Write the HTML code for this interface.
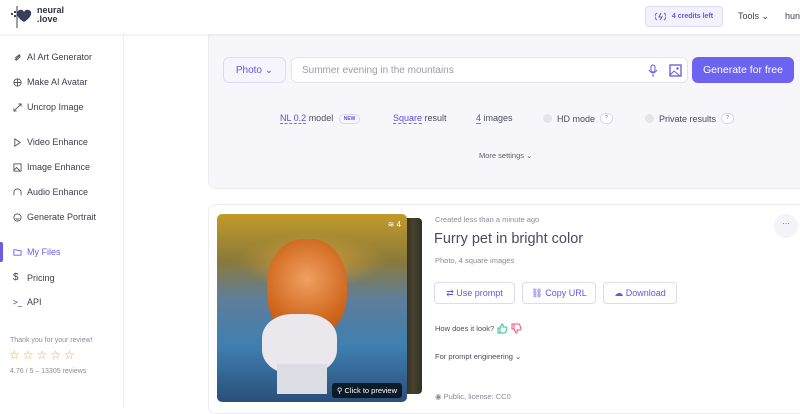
<!DOCTYPE html><html><head><style>
*{box-sizing:border-box;margin:0;padding:0}
body{width:800px;height:407px;overflow:hidden;background:#fff;font-family:"Liberation Sans",sans-serif;color:#3c3d52;position:relative}
.hdr{position:absolute;left:0;top:0;width:800px;height:34px;background:#fff;box-shadow:0 1px 3px rgba(0,0,0,.08);z-index:3}
.side{position:absolute;left:0;top:34px;width:124px;height:373px;border-right:1px solid #ececf2;background:#fff}
.si{position:absolute;left:13px;font-size:9px;color:#3c3d52;display:flex;align-items:center;gap:5px}
.si svg{width:9px;height:9px}
.panel{position:absolute;left:208px;top:34px;width:600px;height:155px;background:#f7f7fb;border-radius:0 0 0 8px;border:1px solid #ececf3;border-top:none}
.pill{position:absolute;border:1px solid #dcdaf5;border-radius:6px;background:#fff}
.card{position:absolute;left:208px;top:204px;width:600px;height:210px;border:1px solid #ececf3;border-radius:8px;background:#fff}
.btn{position:absolute;top:282px;height:22px;border:1px solid #dcdaf5;border-radius:4px;color:#6457e0;font-size:9px;display:flex;align-items:center;justify-content:center;gap:5px}
.u{border-bottom:1px dashed #7b6ff0;color:#5a4fd8}
</style></head><body>
<div class="hdr">
<svg style="position:absolute;left:9px;top:6px" width="24" height="22" viewBox="0 0 24 22"><path d="M8 6c2-3 6-3 7 0 1-3 6-3 7 0 1 3-2 7-7 10-5-3-8-7-7-10z" fill="#3a3d5c"/><rect x="2" y="7" width="2" height="2" fill="#3a3d5c"/><rect x="5" y="5" width="2" height="2" fill="#3a3d5c"/><rect x="5" y="9" width="2" height="2" fill="#3a3d5c"/><rect x="7.5" y="0" width="1" height="22" fill="#3a3d5c"/></svg>
<div style="position:absolute;left:37px;top:6px;font-size:9px;line-height:9px;color:#2f3147;font-weight:bold">neural<br>.love</div>
<div style="position:absolute;left:645px;top:6px;width:78px;height:21px;border:1px solid #dcd9f6;background:#f2f1fd;border-radius:4px;color:#6457e0;font-size:7px;font-weight:bold;display:flex;align-items:center;justify-content:center;gap:6px"><svg width="11" height="9" viewBox="0 0 11 9"><path d="M2 1a4 4 0 0 0 0 7M9 1a4 4 0 0 1 0 7M6 1 4 5h3L5 8" stroke="#6457e0" fill="none"/></svg>4 credits left</div>
<div style="position:absolute;left:738px;top:11px;font-size:9px;color:#3c3d52">Tools ⌄</div>
<div style="position:absolute;left:785px;top:11px;font-size:9px;color:#3c3d52">hun</div>
</div>
<div class="side">
<div class="si" style="top:18px"><svg viewBox="0 0 10 10"><path d="M2 8 8 2M3 5l4-3 1 2-4 4z" stroke="#555" fill="none"/></svg>AI Art Generator</div>
<div class="si" style="top:43px"><svg viewBox="0 0 10 10"><circle cx="5" cy="5" r="4" stroke="#555" fill="none"/><path d="M1 5h8M5 1v8" stroke="#555"/></svg>Make AI Avatar</div>
<div class="si" style="top:68px"><svg viewBox="0 0 10 10"><path d="M1 9 9 1M6 1h3v3M1 6v3h3" stroke="#555" fill="none"/></svg>Uncrop Image</div>
<div class="si" style="top:103px"><svg viewBox="0 0 10 10"><path d="M2 1v8l6-4z" stroke="#555" fill="none"/></svg>Video Enhance</div>
<div class="si" style="top:128px"><svg viewBox="0 0 10 10"><rect x="1" y="1" width="8" height="8" stroke="#555" fill="none"/><path d="M1 8l3-3 4 4" stroke="#555" fill="none"/></svg>Image Enhance</div>
<div class="si" style="top:153px"><svg viewBox="0 0 10 10"><path d="M1 8V5a4 4 0 0 1 8 0v3" stroke="#555" fill="none"/></svg>Audio Enhance</div>
<div class="si" style="top:178px"><svg viewBox="0 0 10 10"><circle cx="5" cy="5" r="4" stroke="#555" fill="none"/><path d="M3 6q2 2 4 0" stroke="#555" fill="none"/></svg>Generate Portrait</div>
<div style="position:absolute;left:0;top:208px;width:3px;height:20px;background:#6c5ce7;border-radius:0 2px 2px 0"></div>
<div class="si" style="top:213px;color:#6c5ce7"><svg viewBox="0 0 10 10"><path d="M1 2h3l1 1h4v5H1z" stroke="#6c5ce7" fill="none"/></svg>My Files</div>
<div class="si" style="top:238px"><span style="width:9px;font-size:10px">$</span>Pricing</div>
<div class="si" style="top:263px"><span style="width:9px;font-size:8px">&gt;_</span>API</div>
<div style="position:absolute;left:10px;top:303px;font-size:7px;color:#8a8b9c">Thank you for your review!</div>
<div style="position:absolute;left:9px;top:314px;font-size:12px;color:#f5a623;letter-spacing:3px">☆☆☆☆☆</div>
<div style="position:absolute;left:10px;top:334px;font-size:7px;color:#8a8b9c">4.76 / 5 – 13305 reviews</div>
</div>
<div class="panel"></div>
<div class="pill" style="left:223px;top:57px;width:63px;height:26px;background:#f6f5fe;color:#6457e0;font-size:10px;display:flex;align-items:center;justify-content:center">Photo ⌄</div>
<div class="pill" style="left:291px;top:57px;width:397px;height:26px;border-color:#e3e2f3"><span style="position:absolute;left:10px;top:7px;font-size:10px;color:#9a9bad">Summer evening in the mountains</span>
<svg style="position:absolute;left:356px;top:6px" width="10" height="14" viewBox="0 0 10 14"><rect x="3" y="1" width="4" height="7" rx="2" stroke="#6457e0" fill="none"/><path d="M1 6q4 6 8 0M5 10v3" stroke="#6457e0" fill="none"/></svg>
<svg style="position:absolute;left:377px;top:6px" width="13" height="13" viewBox="0 0 13 13"><rect x="1" y="1" width="11" height="11" stroke="#6457e0" fill="none" stroke-width="1.3"/><path d="M1 11l4-4 6 5" stroke="#6457e0" fill="none"/><circle cx="8.5" cy="4.5" r="1.2" fill="#6457e0"/></svg></div>
<div style="position:absolute;left:692px;top:57px;width:102px;height:26px;background:#6c63f0;border-radius:6px;color:#fff;font-size:10.5px;display:flex;align-items:center;justify-content:center">Generate for free</div>
<div style="position:absolute;top:113px;left:280px;font-size:9px;color:#4a4b5e;white-space:nowrap"><span class="u">NL 0.2</span> model <span style="display:inline-block;border:1px solid #d8d6f3;border-radius:7px;font-size:5px;font-weight:bold;color:#6457e0;padding:1px 4px;margin-left:3px;vertical-align:1px">NEW</span></div>
<div style="position:absolute;top:113px;left:393px;font-size:9px;color:#4a4b5e"><span class="u">Square</span> result</div>
<div style="position:absolute;top:113px;left:476px;font-size:9px;color:#4a4b5e"><span class="u">4</span> images</div>
<div style="position:absolute;top:113px;left:543px;font-size:9px;color:#4a4b5e;display:flex;align-items:center;gap:5px"><span style="width:9px;height:9px;border-radius:50%;background:#e4e4ec"></span>HD mode <span style="width:13px;height:11px;border:1px solid #d8d6f3;border-radius:6px;font-size:5px;color:#6457e0;text-align:center;line-height:9px;background:#fff">?</span></div>
<div style="position:absolute;top:113px;left:645px;font-size:9px;color:#4a4b5e;display:flex;align-items:center;gap:5px"><span style="width:9px;height:9px;border-radius:50%;background:#e4e4ec"></span>Private results <span style="width:13px;height:11px;border:1px solid #d8d6f3;border-radius:6px;font-size:5px;color:#6457e0;text-align:center;line-height:9px;background:#fff">?</span></div>
<div style="position:absolute;top:151px;left:479px;font-size:7.5px;color:#5a5b6e">More settings ⌄</div>
<div class="card"></div>
<div style="position:absolute;left:404px;top:218px;width:18px;height:176px;background:linear-gradient(90deg,#2a2a20,#4a4230,#2e3324);border-radius:0 4px 4px 0"></div>
<div style="position:absolute;left:217px;top:214px;width:190px;height:188px;border-radius:5px;overflow:hidden;background:linear-gradient(180deg,#c29a2a 0%,#8a7a3a 25%,#5f7e9a 45%,#3f7fb0 70%,#2a4f7a 100%)">
<div style="position:absolute;left:20px;top:20px;width:150px;height:55px;background:radial-gradient(ellipse,#d39b3a,transparent 70%)"></div>
<div style="position:absolute;left:50px;top:25px;width:80px;height:100px;border-radius:45%;background:radial-gradient(circle at 50% 40%,#f0a060,#d0671e 60%,#a4501a)"></div>
<div style="position:absolute;left:45px;top:100px;width:75px;height:60px;border-radius:40%;background:#eae8ec"></div>
<div style="position:absolute;left:60px;top:150px;width:50px;height:30px;background:#dcdde4"></div>
<div style="position:absolute;right:5px;bottom:4px;background:rgba(0,0,0,.7);color:#fff;font-size:7.5px;padding:3px 5px;border-radius:3px">⚲ Click to preview</div>
<div style="position:absolute;right:6px;top:6px;color:#fff;font-size:8px">≋ 4</div>
</div>
<div style="position:absolute;left:435px;top:215px;font-size:7.5px;color:#8a8b9c">Created less than a minute ago</div>
<div style="position:absolute;left:434px;top:231px;font-size:14.5px;color:#4a4b60">Furry pet in bright color</div>
<div style="position:absolute;left:435px;top:256px;font-size:7.5px;color:#8a8b9c">Photo, 4 square images</div>
<div class="btn" style="left:434px;width:81px">⇄ Use prompt</div>
<div class="btn" style="left:522px;width:74px">⛓ Copy URL</div>
<div class="btn" style="left:603px;width:74px">☁ Download</div>
<div style="position:absolute;left:435px;top:323px;font-size:7.5px;color:#4a4b5e;display:flex;align-items:center;gap:3px">How does it look?
<svg width="11" height="11" viewBox="0 0 11 11"><path d="M1 5h2v5H1zM3 5l2-4c1 0 1.5 1 1 3h3c1 0 1 1 .8 2l-1 3c-.3 1-1 1-2 1H3" stroke="#2cc38b" fill="none"/></svg>
<svg width="11" height="11" viewBox="0 0 11 11"><path d="M1 1h2v5H1zM3 6l2 4c1 0 1.5-1 1-3h3c1 0 1-1 .8-2l-1-3C8.5 1 8 1 7 1H3" stroke="#ef4f7a" fill="none"/></svg></div>
<div style="position:absolute;left:435px;top:352px;font-size:7.5px;color:#4a4b5e">For prompt engineering ⌄</div>
<div style="position:absolute;left:435px;top:392px;font-size:7.5px;color:#8a8b9c">◉ Public, license: CC0</div>
<div style="position:absolute;left:774px;top:214px;width:24px;height:24px;border-radius:50%;background:#f3f3f8;font-size:8px;text-align:center;line-height:20px;color:#555">···</div>
</body></html>
